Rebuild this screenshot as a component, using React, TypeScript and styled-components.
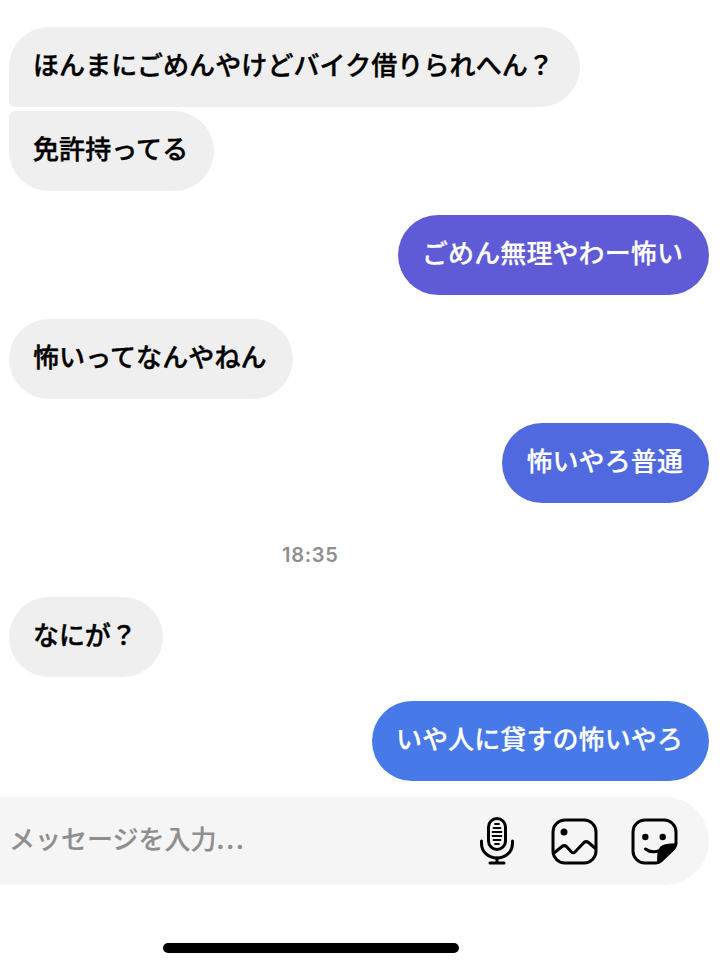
import React from 'react';
import styled, { createGlobalStyle } from 'styled-components';

const GlobalStyle = createGlobalStyle`
    html, body {
        margin: 0;
        padding: 0;
        background: #fff;
    }
    body {
        font-family: "Noto Sans CJK JP", "Noto Sans", sans-serif;
    }
`;

type Item =
    | { kind: 'in'; text: string; tail?: 'first' | 'last' }
    | { kind: 'out'; text: string; color: string }
    | { kind: 'time'; text: string };

const items: Item[] = [
    { kind: 'in', text: 'ほんまにごめんやけどバイク借りられへん？', tail: 'first' },
    { kind: 'in', text: '免許持ってる', tail: 'last' },
    { kind: 'out', text: 'ごめん無理やわー怖い', color: '#5f5bd7' },
    { kind: 'in', text: '怖いってなんやねん' },
    { kind: 'out', text: '怖いやろ普通', color: '#5069df' },
    { kind: 'time', text: '18:35' },
    { kind: 'in', text: 'なにが？' },
    { kind: 'out', text: 'いや人に貸すの怖いやろ', color: '#4779e8' },
];

const MicIcon = () => (
    <IconSvg $width={42} viewBox="0 0 42 48">
        <rect x="12.500" y="1.500" width="17" height="31" rx="8.500" fill="none" stroke="#000" strokeWidth="3" />
        <path
            d="M19 7h4M17.500 11h7M16.500 15h9M16.500 19h9M17.500 23h7M19 27h4"
            stroke="#000"
            strokeWidth="1.800"
            strokeLinecap="round"
        />
        <path
            d="M5.500 24v2.500c0 8.500 7 14.500 15.500 14.500s15.500-6 15.500-14.500V24"
            fill="none"
            stroke="#000"
            strokeWidth="3"
            strokeLinecap="round"
        />
        <path d="M21 41v5M14 46h14" stroke="#000" strokeWidth="3" strokeLinecap="round" />
    </IconSvg>
);

const ImageIcon = () => (
    <IconSvg $width={48} viewBox="0 0 48 48">
        <rect x="3" y="3" width="43" height="43" rx="12" fill="none" stroke="#000" strokeWidth="3" />
        <circle cx="14" cy="15" r="3.500" fill="#000" />
        <path
            d="M4 36l8-6.500c1.500-1.200 3-1.200 4.500 0l5 5.500c1 1 2.500 1 3.500 0l9-9.500c1.500-1.200 3-1.200 4.500 0l7 6"
            fill="none"
            stroke="#000"
            strokeWidth="3"
            strokeLinecap="round"
            strokeLinejoin="round"
        />
    </IconSvg>
);

const StickerIcon = () => (
    <IconSvg $width={48} viewBox="0 0 48 48">
        <path
            d="M15 3h19a12 12 0 0 1 12 12v11.500c0 2-0.800 3.500-2 5L31 44c-1.500 1.400-3 2-5 2H15a12 12 0 0 1-12-12V15a12 12 0 0 1 12-12z"
            fill="none"
            stroke="#000"
            strokeWidth="3"
        />
        <path
            d="M46 27c-6 0-12 0.500-15 3c-3 3-3.500 9-3 16c1.500-0.300 2.500-1 3-2l13-12.500c1.200-1.500 2-3 2-4.500z"
            fill="#000"
            stroke="#000"
            strokeWidth="1.500"
            strokeLinejoin="round"
        />
        <circle cx="15.300" cy="20" r="3.200" fill="#000" />
        <circle cx="32.700" cy="20" r="3.200" fill="#000" />
        <path d="M15.500 32c4 3.200 9 3.500 14.500 1.500" fill="none" stroke="#000" strokeWidth="3" strokeLinecap="round" />
    </IconSvg>
);

const App: React.FC = () => {
    return (
        <Screen>
            <GlobalStyle />
            <MessageList>
                {items.map((item, index) => {
                    if (item.kind === 'time') {
                        return <TimeStamp key={index}>{item.text}</TimeStamp>;
                    }
                    if (item.kind === 'out') {
                        return (
                            <OutgoingBubble key={index} $color={item.color}>
                                {item.text}
                            </OutgoingBubble>
                        );
                    }
                    return (
                        <IncomingBubble key={index} $tail={item.tail}>
                            {item.text}
                        </IncomingBubble>
                    );
                })}
            </MessageList>
            <Composer>
                <Placeholder>
                    メッセージを入力<Dots>...</Dots>
                </Placeholder>
                <ComposerIcons>
                    <MicIcon />
                    <ImageIcon />
                    <StickerIcon />
                </ComposerIcons>
            </Composer>
            <HomeBar />
        </Screen>
    );
};
export default App;

const Screen = styled.div`
    width: 724px;
    height: 968px;
    overflow: hidden;
    padding: 27px 15px 0 0;
    box-sizing: border-box;
    background: #fff;
`;
const MessageList = styled.div`
    display: flex;
    flex-direction: column;
    padding-left: 9px;
`;
const Bubble = styled.div`
    height: 80px;
    padding: 0 26px 8px 24px;
    box-sizing: border-box;
    display: flex;
    align-items: center;
    border-radius: 40px;
    font-size: 26px;
    font-weight: 500;
    letter-spacing: 0.1px;
    white-space: nowrap;
`;
const IncomingBubble = styled(Bubble)<{ $tail?: 'first' | 'last' }>`
    align-self: flex-start;
    background: #efefef;
    color: #000;
    -webkit-text-stroke: 0.4px #000;
    margin-top: ${(p) => (p.$tail === 'last' ? '4px' : p.$tail === 'first' ? '0' : '24px')};
    border-bottom-left-radius: ${(p) => (p.$tail === 'first' ? '6px' : '40px')};
    border-top-left-radius: ${(p) => (p.$tail === 'last' ? '6px' : '40px')};
`;
const OutgoingBubble = styled(Bubble)<{ $color: string }>`
    align-self: flex-end;
    margin-top: 24px;
    background: ${(p) => p.$color};
    color: #fff;
    -webkit-text-stroke: 0.2px #fff;
`;
const TimeStamp = styled.div`
    align-self: flex-start;
    margin: 38px 0 4px 273px;
    height: 28px;
    line-height: 28px;
    font-family: Inter, "Liberation Sans", sans-serif;
    font-size: 20px;
    font-weight: 600;
    letter-spacing: 0.7px;
    color: #8e8e8e;
`;
const Composer = styled.div`
    margin-top: 16px;
    height: 88px;
    display: flex;
    align-items: center;
    justify-content: space-between;
    padding: 0 31px 0 9px;
    border-radius: 0 44px 44px 0;
    background: #f5f5f5;
`;
const Placeholder = styled.span`
    font-size: 26px;
    font-weight: 500;
    color: #8e8e8e;
    -webkit-text-stroke: 0.2px #8e8e8e;
    padding-bottom: 8px;
`;
const Dots = styled.span`
    letter-spacing: 2px;
`;
const ComposerIcons = styled.div`
    display: flex;
    align-items: center;
    gap: 32px;
`;
const IconSvg = styled.svg<{ $width: number }>`
    display: block;
    width: ${(p) => p.$width}px;
    height: 48px;
`;
const HomeBar = styled.div`
    width: 296px;
    height: 10px;
    margin: 58px 0 0 163px;
    border-radius: 5px;
    background: #000;
`;
